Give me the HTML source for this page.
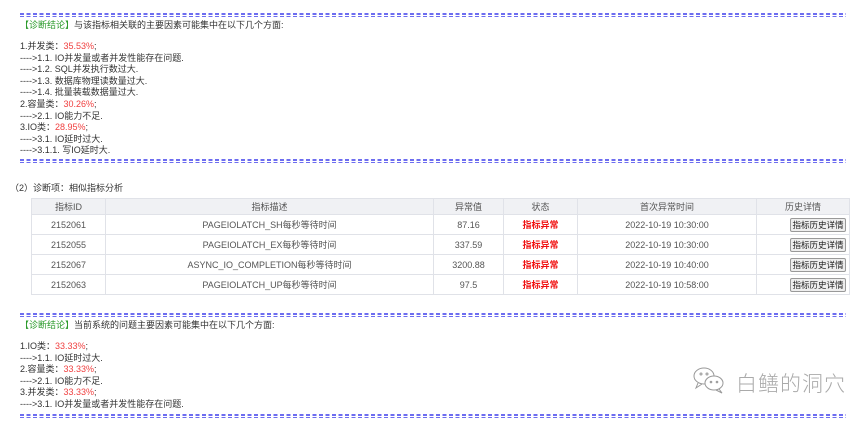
<!DOCTYPE html>
<html><head><meta charset="utf-8"><style>
*{margin:0;padding:0;box-sizing:border-box}
body{width:865px;height:422px;background:#fff;font-family:"Liberation Sans","Noto Sans CJK SC",sans-serif;color:#333;font-size:9px;position:relative;overflow:hidden}
.dash{position:absolute;left:20px;width:826px;height:4px;
background:repeating-linear-gradient(90deg,#6d6df0 0 4px,transparent 4px 6.5px);}
.dash::after{content:"";position:absolute;left:0;right:0;top:1.5px;height:1px;background:#fff}
.blk{position:absolute;left:20px;line-height:11.6px;white-space:nowrap}
.g{color:#2a9a2a}
.r{color:#f04040}
table{position:absolute;left:31px;top:198px;width:818px;border-collapse:collapse;font-size:9px;color:#555;table-layout:fixed}
td,th{border:1px solid #e0e2e8;text-align:center;font-weight:normal;height:20px;padding:0;white-space:nowrap;overflow:hidden}
th{background:#f0f1f4;height:16px}
.st{color:#f01010;font-weight:bold}
.btn{display:inline-block;border:1px solid #999;background:#eee;border-radius:2px;padding:0 1px;color:#222;font-size:8.5px;line-height:12px;margin-left:30px;white-space:nowrap}
</style></head><body>
<div class="dash" style="top:13px"></div>
<div class="blk" style="top:20px"><span class="g">【诊断结论】</span>与该指标相关联的主要因素可能集中在以下几个方面:</div>
<div class="blk" style="top:41px">
1.并发类：<span class="r">35.53%</span>;<br>
----&gt;1.1. IO并发量或者并发性能存在问题.<br>
----&gt;1.2. SQL并发执行数过大.<br>
----&gt;1.3. 数据库物理读数量过大.<br>
----&gt;1.4. 批量装载数据量过大.<br>
2.容量类：<span class="r">30.26%</span>;<br>
----&gt;2.1. IO能力不足.<br>
3.IO类：<span class="r">28.95%</span>;<br>
----&gt;3.1. IO延时过大.<br>
----&gt;3.1.1. 写IO延时大.</div>
<div class="dash" style="top:159px"></div>
<div class="blk" style="top:183px;left:10px">（2）诊断项：相似指标分析</div>
<table>
<colgroup><col style="width:74px"><col style="width:328px"><col style="width:70px"><col style="width:74px"><col style="width:179px"><col style="width:93px"></colgroup>
<tr><th>指标ID</th><th>指标描述</th><th>异常值</th><th>状态</th><th>首次异常时间</th><th>历史详情</th></tr>
<tr><td>2152061</td><td>PAGEIOLATCH_SH每秒等待时间</td><td>87.16</td><td class="st">指标异常</td><td>2022-10-19 10:30:00</td><td><span class="btn">指标历史详情</span></td></tr>
<tr><td>2152055</td><td>PAGEIOLATCH_EX每秒等待时间</td><td>337.59</td><td class="st">指标异常</td><td>2022-10-19 10:30:00</td><td><span class="btn">指标历史详情</span></td></tr>
<tr><td>2152067</td><td>ASYNC_IO_COMPLETION每秒等待时间</td><td>3200.88</td><td class="st">指标异常</td><td>2022-10-19 10:40:00</td><td><span class="btn">指标历史详情</span></td></tr>
<tr><td>2152063</td><td>PAGEIOLATCH_UP每秒等待时间</td><td>97.5</td><td class="st">指标异常</td><td>2022-10-19 10:58:00</td><td><span class="btn">指标历史详情</span></td></tr>
</table>
<div class="dash" style="top:313px"></div>
<div class="blk" style="top:320px"><span class="g">【诊断结论】</span>当前系统的问题主要因素可能集中在以下几个方面:</div>
<div class="blk" style="top:341px">
1.IO类：<span class="r">33.33%</span>;<br>
----&gt;1.1. IO延时过大.<br>
2.容量类：<span class="r">33.33%</span>;<br>
----&gt;2.1. IO能力不足.<br>
3.并发类：<span class="r">33.33%</span>;<br>
----&gt;3.1. IO并发量或者并发性能存在问题.</div>
<div class="dash" style="top:414px"></div>
<svg style="position:absolute;left:692px;top:366px" width="36" height="28" viewBox="0 0 36 28" fill="none" stroke="#999" stroke-width="1">
<ellipse cx="12" cy="10" rx="10" ry="8"/><path d="M6 17 L4 22 L10 18"/>
<ellipse cx="22" cy="17" rx="9" ry="7" fill="#fff"/><path d="M27 23 L30 27 L24 24"/>
<circle cx="9" cy="8" r="1"/><circle cx="15" cy="8" r="1"/><circle cx="19" cy="16" r="0.8"/><circle cx="25" cy="16" r="0.8"/>
</svg>
<div style="position:absolute;left:736px;top:368px;font-size:21px;color:#aaa;font-family:'Noto Sans CJK SC',sans-serif;font-weight:300;letter-spacing:1px">白鳝的洞穴</div>
</body></html>
